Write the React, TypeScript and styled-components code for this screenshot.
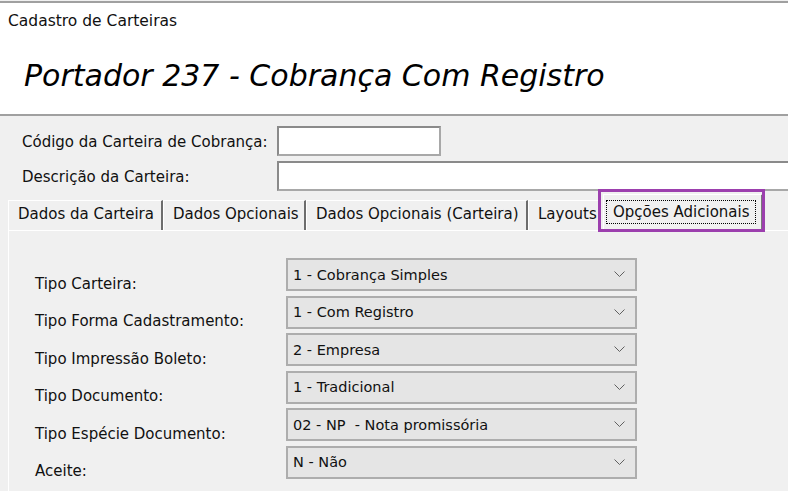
import React from "react";
import styled, { createGlobalStyle, css } from "styled-components";

const Global = createGlobalStyle`
  html, body { margin: 0; padding: 0; background: #f0f0f0; }
  body { font-family: "DejaVu Sans", Tahoma, sans-serif; color: #111; }
  #root { width: 788px; height: 491px; overflow: hidden; }
`;

const Window = styled.div`
  width: 788px;
  height: 491px;
  overflow: hidden;
  background: #f0f0f0;
  padding-top: 1px;
  box-sizing: border-box;
`;

const Header = styled.header`
  height: 115px;
  box-sizing: border-box;
  background: #ffffff;
  border-top: 2px solid #a0a0a0;
  border-bottom: 2px solid #a0a0a0;
  display: flex;
  flex-direction: column;
`;

const Caption = styled.div`
  font-size: 15.5px;
  line-height: 19px;
  padding: 9px 0 0 8px;
`;

const Title = styled.h1`
  margin: 0;
  padding: 27px 0 0 24px;
  font-size: 30px;
  line-height: 36px;
  font-weight: normal;
  font-style: italic;
  color: #000;
`;

const Body = styled.div`
  padding: 10px 0 0 8px;
  display: flex;
  flex-direction: column;
  width: 1000px;
`;

const FieldRow = styled.div`
  display: grid;
  grid-template-columns: 269px auto;
  align-items: center;
  height: 30px;
  margin-bottom: 5px;
`;

const FieldLabel = styled.label`
  font-size: 15px;
  padding-left: 14px;
  padding-top: 2px;
`;

const TextBox = styled.div<{ $w: number }>`
  width: ${(p) => p.$w}px;
  height: 30px;
  box-sizing: border-box;
  background: #fff;
  border: 2px solid #8a8a8a;
  border-right-color: #a8a8a8;
  border-bottom-color: #a8a8a8;
`;

const TabList = styled.div`
  display: flex;
  align-items: flex-end;
  height: 39px;
  margin-top: -5px;
  position: relative;
  z-index: 1;
`;

const Tab = styled.div<{ $w: number; $active?: boolean }>`
  position: relative;
  width: ${(p) => p.$w}px;
  box-sizing: border-box;
  font-size: 15px;
  height: 30px;
  display: flex;
  align-items: center;
  padding: 0 0 3px 9px;
  background: #f0f0f0;
  border-top: 1px solid #ffffff;
  border-left: 1px solid #ffffff;
  border-right: 2px solid #6d6d6d;
  white-space: nowrap;
  ${(p) =>
    p.$active &&
    css`
      height: 37px;
      margin-bottom: -1px;
      padding: 0 0 2px 2px;
      margin-left: 3px;
      border-right-color: #7a7a7a;
      &::after {
        content: "";
        position: absolute;
        top: -6px;
        bottom: -1px;
        left: -6px;
        right: -4px;
        border: 3px solid #9c3fae;
        pointer-events: none;
      }
    `}
`;

const FocusText = styled.span`
  display: inline-flex;
  align-items: center;
  box-sizing: border-box;
  height: 24px;
  padding: 0 5px 1px 6px;
  border: 1px dotted #000000;
`;

const TabPanel = styled.div`
  border-top: 1px solid #ffffff;
  border-left: 1px solid #ffffff;
  background: #f0f0f0;
  height: 300px;
  padding: 27px 0 0 26px;
  box-sizing: border-box;
  display: grid;
  grid-template-columns: 251px 351px;
  grid-auto-rows: 33px;
  row-gap: 4.5px;
  align-items: center;
`;

const RowLabel = styled.span`
  font-size: 15px;
  padding-top: 18px;
`;

const Combo = styled.div`
  height: 33px;
  box-sizing: border-box;
  background: #e5e5e5;
  border: 2px solid #adadad;
  display: flex;
  align-items: center;
  justify-content: space-between;
  padding: 0 10px 0 5px;
  font-size: 14.5px;
  white-space: pre;
`;

const Chevron = () => (
  <svg width="11" height="7" viewBox="0 0 11 7">
    <path d="M0.5 0.5 L5.5 5.5 L10.5 0.5" fill="none" stroke="#606060" strokeWidth="1" />
  </svg>
);

const rows: [string, string][] = [
  ["Tipo Carteira:", "1 - Cobrança Simples"],
  ["Tipo Forma Cadastramento:", "1 - Com Registro"],
  ["Tipo Impressão Boleto:", "2 - Empresa"],
  ["Tipo Documento:", "1 - Tradicional"],
  ["Tipo Espécie Documento:", "02 - NP  - Nota promissória"],
  ["Aceite:", "N - Não"],
];

export default function App() {
  return (
    <Window>
      <Global />
      <Header>
        <Caption>Cadastro de Carteiras</Caption>
        <Title>Portador 237 - Cobrança Com Registro</Title>
      </Header>
      <Body>
        <FieldRow>
          <FieldLabel>Código da Carteira de Cobrança:</FieldLabel>
          <TextBox $w={164} />
        </FieldRow>
        <FieldRow>
          <FieldLabel>Descrição da Carteira:</FieldLabel>
          <TextBox $w={700} />
        </FieldRow>
        <TabList>
          <Tab $w={155}>Dados da Carteira</Tab>
          <Tab $w={143}>Dados Opcionais</Tab>
          <Tab $w={222}>Dados Opcionais (Carteira)</Tab>
          <Tab $w={72}>Layouts</Tab>
          <Tab $w={160} $active>
            <FocusText>Opções Adicionais</FocusText>
          </Tab>
        </TabList>
        <TabPanel>
          {rows.map(([l, v]) => (
            <React.Fragment key={l}>
              <RowLabel>{l}</RowLabel>
              <Combo>
                <span>{v}</span>
                <Chevron />
              </Combo>
            </React.Fragment>
          ))}
        </TabPanel>
      </Body>
    </Window>
  );
}
